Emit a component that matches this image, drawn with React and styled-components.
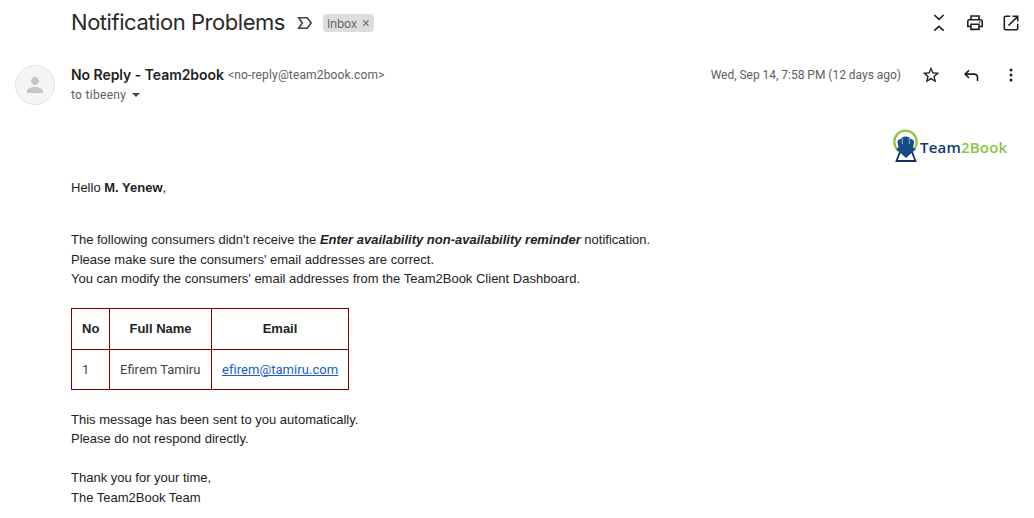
import styled, { createGlobalStyle } from "styled-components";

const GlobalStyle = createGlobalStyle`
  body {
    margin: 0;
    background-color: white;
  }
`;
const Container = styled.div`
  width: 1034px;
  height: 518px;
  box-sizing: border-box;
  overflow: hidden;
  font-family: Roboto, "Liberation Sans", sans-serif;
  color: #1f1f1f;
`;
const Head = styled.header`
  height: 46px;
  padding: 0 13px 0 71px;
  display: flex;
  align-items: center;
  justify-content: space-between;
`;
const Subject = styled.div`
  display: flex;
  align-items: center;
`;
const Title = styled.h2`
  width: 226px;
  margin: 0;
  padding-bottom: 2px;
  font-family: Inter, sans-serif;
  font-size: 22px;
  line-height: 28px;
  font-weight: 400;
  letter-spacing: -0.45px;
  color: #2a2a2a;
  white-space: nowrap;
`;
const Label = styled.span`
  width: 51px;
  height: 18px;
  margin-left: 10px;
  padding: 0 4px;
  box-sizing: border-box;
  display: flex;
  align-items: center;
  justify-content: space-between;
  border-radius: 4px;
  background-color: #ddd;
  color: #666;
  font-family: Inter, sans-serif;
  font-size: 12px;
  letter-spacing: -0.2px;
`;
const Actions = styled.div`
  display: flex;
  align-items: center;
  gap: 16px;
`;
const Icon = styled.svg`
  display: block;
  flex: none;
  width: ${(props) => props.$size || 20}px;
  height: ${(props) => props.$size || 20}px;
  fill: ${(props) => props.$color || "#1f1f1f"};
`;
const Sender = styled.section`
  height: 59px;
  padding: 19px 13px 0 15px;
  box-sizing: border-box;
  display: flex;
`;
const Avatar = styled.div`
  width: 40px;
  height: 40px;
  box-sizing: border-box;
  flex: none;
  display: flex;
  align-items: center;
  justify-content: center;
  border: 1px solid #e2e2e2;
  border-radius: 50%;
  background-color: #f5f5f5;
`;
const SenderInfo = styled.div`
  flex: 1;
  margin-left: 16px;
`;
const From = styled.div`
  height: 20px;
  display: flex;
  align-items: center;
  white-space: nowrap;
`;
const Name = styled.span`
  width: 157px;
  padding-bottom: 1px;
  font-family: Inter, sans-serif;
  font-size: 14px;
  font-weight: 600;
  letter-spacing: -0.05px;
`;
const Address = styled.span`
  color: #5e5e5e;
  font-size: 12px;
  letter-spacing: 0.15px;
`;
const Recipient = styled.div`
  height: 20px;
  display: flex;
  align-items: center;
  color: #5e5e5e;
  font-size: 12px;
  letter-spacing: 0.3px;
`;
const SentAt = styled.span`
  color: #5e5e5e;
  font-size: 12px;
  letter-spacing: -0.02px;
`;
const Meta = styled(Actions)`
  height: 20px;
  gap: 20px;
`;
const Brand = styled.div`
  height: 72px;
  padding: 24px 26px 0 0;
  box-sizing: border-box;
  display: flex;
  justify-content: flex-end;
`;
const Mark = styled.svg`
  width: 26px;
  height: 34px;
`;
const BrandName = styled.span`
  width: 89px;
  padding: 9px 0 0 1px;
  box-sizing: border-box;
  color: #12396f;
  font-family: "Open Sans", sans-serif;
  font-size: 15px;
  line-height: 18px;
  font-weight: 650;
  letter-spacing: 0.2px;
  white-space: nowrap;
  & span {
    color: #8bc53f;
  }
`;
const Message = styled.main`
  padding: 1px 0 0 71px;
  color: #222;
  font-family: "Liberation Sans", Arial, sans-serif;
  font-size: 13px;
  line-height: 19.5px;
`;
const Paragraph = styled.p`
  margin: 0 0 ${(props) => props.$gap || 0}px;
  white-space: nowrap;
`;
const Table = styled.table`
  width: 278px;
  height: 82px;
  margin-bottom: 19.7px;
  border-collapse: collapse;
  table-layout: fixed;
  & th,
  & td {
    padding: 0 10px;
    border: 1px solid #800000;
    white-space: nowrap;
  }
  & td {
    color: #444;
    font-family: Roboto, sans-serif;
    text-align: left;
  }
  & a {
    color: #175cd3;
    letter-spacing: 0.05px;
  }
`;
const Col = styled.col`
  width: ${(props) => props.$width}px;
`;

function BrandMark() {
  return (
    <Mark viewBox="0 0 26 34">
      <circle cx="12.5" cy="12.8" r="11.2" fill="none" stroke="#8bc53f" strokeWidth="2.2" />
      <path d="M7 23 H19 L22.5 32 H3.5 Z" fill="white" stroke="#142f61" strokeWidth="1.8" />
      <path
        d="M4.5 13.5 Q4.5 10 8 10 Q8.5 7.5 12.8 7.5 Q17 7.5 17.5 10 Q21 10 21 13.5 L20 18.5 L23 20 L13 29 L3 20 L5.5 18.5 Z"
        fill="#174b86"
      />
      <path d="M9.3 8.5 V15 M16.3 8.5 V15" stroke="#a9c6de" strokeWidth="0.8" />
    </Mark>
  );
}

export default function App() {
  return (
    <>
      <GlobalStyle />
      <Container>
        <Head>
          <Subject>
            <Title>Notification Problems</Title>
            <Icon viewBox="0 0 16 16" $size={16}>
              <path
                d="M1.7 2.7 H10.2 L14.2 8 L10.2 13.3 H1.7 L5.3 8 Z"
                fill="none"
                stroke="#444"
                strokeWidth="1.6"
              />
            </Icon>
            <Label>
              Inbox
              <Icon viewBox="0 0 8 8" $size={8}>
                <path d="M1.2 1.4 L6.6 6.8 M6.6 1.4 L1.2 6.8" stroke="#666" strokeWidth="1.1" />
              </Icon>
            </Label>
          </Subject>
          <Actions>
            <Icon viewBox="0 0 20 20">
              <path
                d="M5.3 2 L10 6.3 L14.7 2 M5.3 17.6 L10 13.3 L14.7 17.6"
                fill="none"
                stroke="#1f1f1f"
                strokeWidth="1.6"
              />
            </Icon>
            <Icon viewBox="0 0 20 20">
              <path
                d="M6 6.5 V3 H14 V6.5 M5.5 13.5 H2.8 V8.3 Q2.8 6.7 4.4 6.7 H15.6 Q17.2 6.7 17.2 8.3 V13.5 H14.5 M6 11.2 H14 V16.4 H6 Z"
                fill="none"
                stroke="#1f1f1f"
                strokeWidth="1.6"
              />
              <circle cx="14.6" cy="9.1" r="0.8" />
            </Icon>
            <Icon viewBox="0 0 20 20">
              <path
                d="M9.2 3.3 H4.6 Q3.3 3.3 3.3 4.6 V15.4 Q3.3 16.7 4.6 16.7 H15.4 Q16.7 16.7 16.7 15.4 V10.8 M11.5 3.3 H16.7 V8.5 M16.5 3.5 L7.5 12.5"
                fill="none"
                stroke="#1f1f1f"
                strokeWidth="1.6"
              />
            </Icon>
          </Actions>
        </Head>
        <Sender>
          <Avatar>
            <Icon viewBox="0 0 24 24" $size={24} $color="#c6c6c6">
              <path d="M12 12c2.21 0 4-1.79 4-4s-1.79-4-4-4-4 1.79-4 4 1.79 4 4 4zm0 2c-2.67 0-8 1.34-8 4v2h16v-2c0-2.66-5.33-4-8-4z" />
            </Icon>
          </Avatar>
          <SenderInfo>
            <From>
              <Name>No Reply - Team2book</Name>
              <Address>&lt;no-reply@team2book.com&gt;</Address>
            </From>
            <Recipient>
              to tibeeny
              <Icon viewBox="0 0 20 20" $color="#444">
                <path d="M6 8 H14 L10 12 Z" />
              </Icon>
            </Recipient>
          </SenderInfo>
          <Meta>
            <SentAt>Wed, Sep 14, 7:58 PM (12 days ago)</SentAt>
            <Icon viewBox="0 0 24 24">
              <path d="M22 9.24l-7.19-.62L12 2 9.19 8.63 2 9.24l5.46 4.73L5.82 21 12 17.27 18.18 21l-1.63-7.03L22 9.24zM12 15.4l-3.76 2.27 1-4.28-3.32-2.88 4.38-.38L12 6.1l1.71 4.04 4.38.38-3.32 2.88 1 4.28L12 15.4z" />
            </Icon>
            <Icon viewBox="0 0 20 20">
              <path
                d="M8 5.2 L4.1 9.1 L8 13 M4.1 9.1 H13 Q16.5 9.1 16.5 12.6 V16"
                fill="none"
                stroke="#1f1f1f"
                strokeWidth="1.6"
              />
            </Icon>
            <Icon viewBox="0 0 20 20">
              <circle cx="10" cy="5" r="1.5" />
              <circle cx="10" cy="10" r="1.5" />
              <circle cx="10" cy="15" r="1.5" />
            </Icon>
          </Meta>
        </Sender>
        <Brand>
          <BrandMark />
          <BrandName>
            Team<span>2Book</span>
          </BrandName>
        </Brand>
        <Message>
          <Paragraph $gap={32.5}>
            Hello <b>M. Yenew</b>,
          </Paragraph>
          <Paragraph $gap={19.5}>
            The following consumers didn't receive the{" "}
            <b>
              <i>Enter availability non-availability reminder</i>
            </b>{" "}
            notification.
            <br />
            Please make sure the consumers' email addresses are correct.
            <br />
            You can modify the consumers' email addresses from the Team2Book Client Dashboard.
          </Paragraph>
          <Table>
            <colgroup>
              <Col $width={38} />
              <Col $width={102} />
              <Col $width={137} />
            </colgroup>
            <tbody>
              <tr>
                <th>No</th>
                <th>Full Name</th>
                <th>Email</th>
              </tr>
              <tr>
                <td>1</td>
                <td>Efirem Tamiru</td>
                <td>
                  <a href="mailto:efirem@tamiru.com">efirem@tamiru.com</a>
                </td>
              </tr>
            </tbody>
          </Table>
          <Paragraph $gap={19.5}>
            This message has been sent to you automatically.
            <br />
            Please do not respond directly.
          </Paragraph>
          <Paragraph>
            Thank you for your time,
            <br />
            The Team2Book Team
          </Paragraph>
        </Message>
      </Container>
    </>
  );
}
